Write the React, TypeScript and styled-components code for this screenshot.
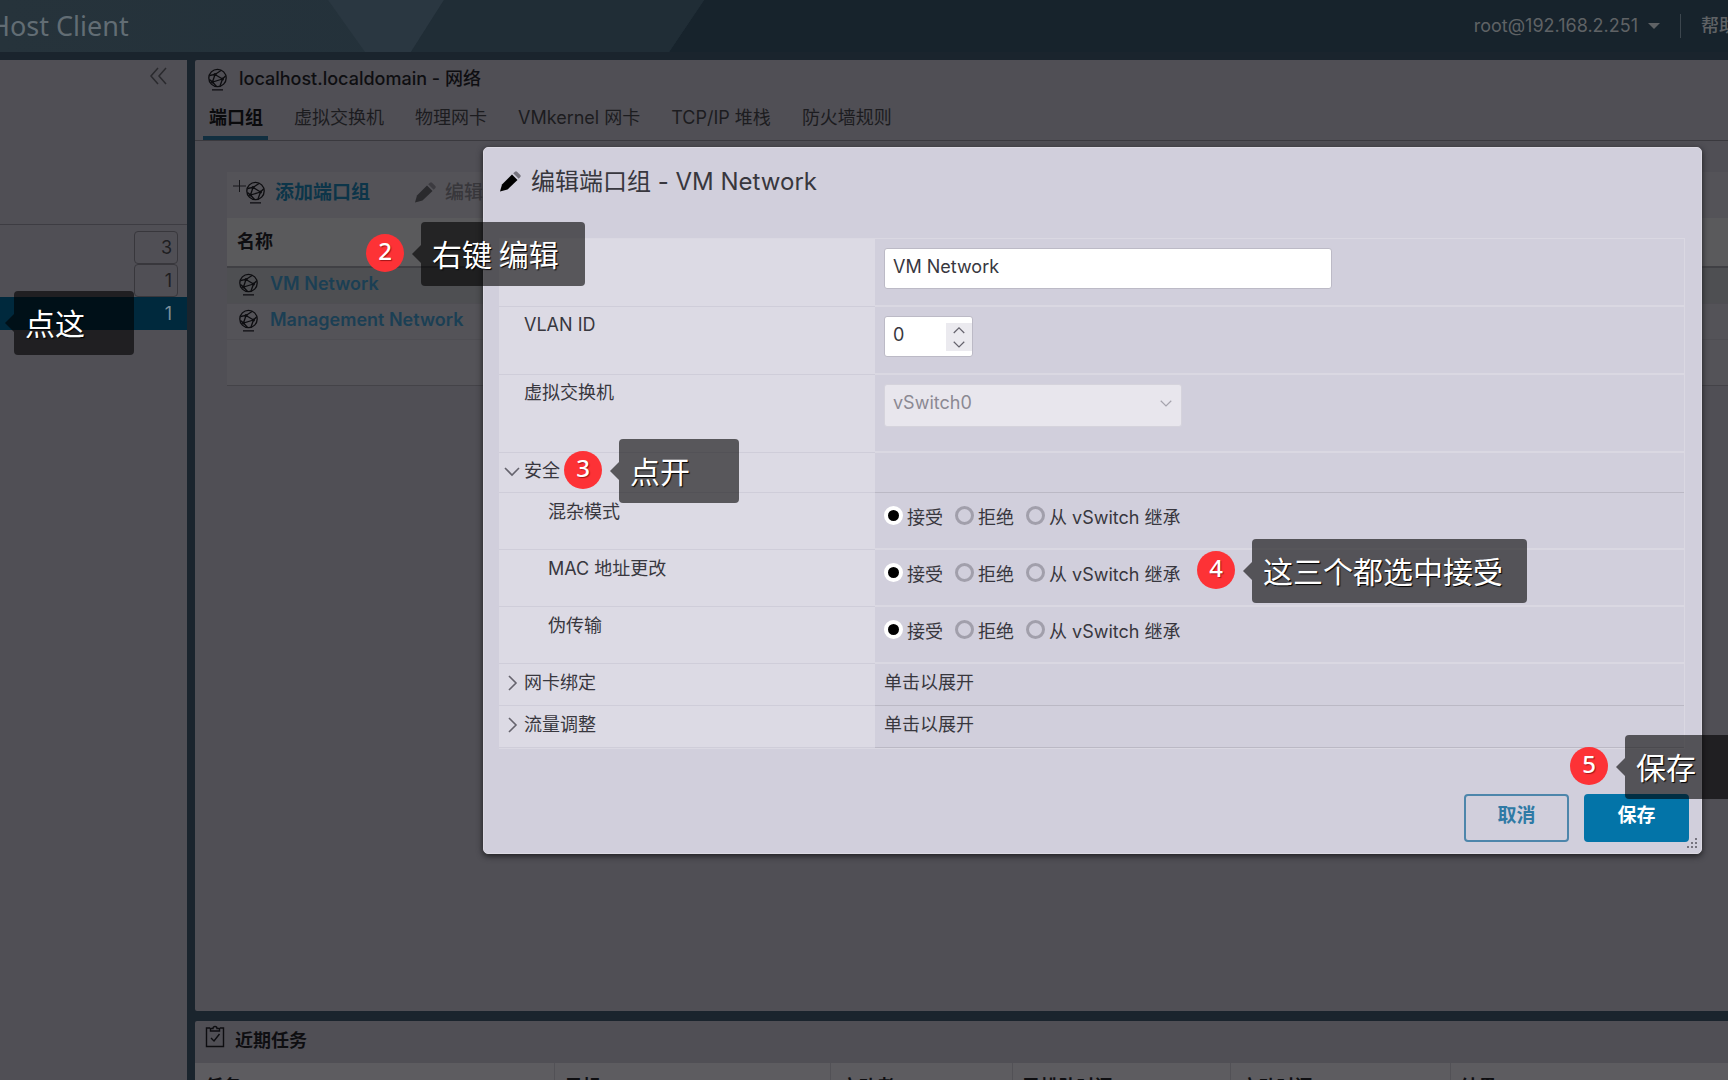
import React from 'react';
import styled, { createGlobalStyle, css } from 'styled-components';

const Global = createGlobalStyle`
  * { box-sizing: border-box; }
  html, body, #root { height: 100%; }
  body {
    margin: 0;
    overflow: hidden;
    background: #1a242d;
    color: #0e0e11;
    font-family: Inter, 'Noto Sans CJK SC', sans-serif;
    font-size: 18px;
    line-height: 24px;
  }
  button, input, select { font: inherit; color: inherit; margin: 0; }
  button { border: 0; background: none; padding: 0; text-align: left; }
  a { text-decoration: none; }
  ul, h1, h2, fieldset { margin: 0; padding: 0; border: 0; list-style: none; }
`;

const Shell = styled.div`
  display: flex;
  flex-direction: column;
  height: 100vh;
  overflow: hidden;
`;

const TopBar = styled.header`
  position: relative;
  flex: none;
  display: flex;
  align-items: center;
  justify-content: space-between;
  height: 52px;
  background: #17232c;
`;

const BarArt = styled.svg`
  position: absolute;
  inset: 0 auto auto 0;
`;

const Brand = styled.div`
  position: relative;
  margin-left: -10px;
  font-family: 'Noto Sans', sans-serif;
  font-size: 27px;
  line-height: 48px;
  color: #626d74;
  white-space: nowrap;
`;

const UserArea = styled.div`
  position: relative;
  flex: none;
  display: flex;
  align-items: center;
  margin-right: -9px;
  color: #5f6265;
`;

const UserButton = styled.button`
  display: flex;
  align-items: center;
  gap: 10px;
  padding-right: 20px;
  border-right: 1px solid #3c464e;
  color: #5f6265;
`;

const Caret = styled.span`
  border: 6px solid transparent;
  border-top-color: #5f6265;
  border-bottom: 0;
`;

const HelpButton = styled.button`
  padding-left: 20px;
  font-weight: 500;
  color: #5f6265;
  white-space: nowrap;
`;

const Body = styled.div`
  flex: 1;
  min-height: 0;
  display: flex;
  gap: 8px;
  padding-top: 8px;
`;

const Sidebar = styled.nav`
  flex: none;
  width: 187px;
  background: #504f55;
`;

const SideTop = styled.div`
  display: flex;
  justify-content: flex-end;
  align-items: flex-start;
  height: 165px;
  padding: 6px 20px;
  border-bottom: 1px solid #3d3c42;
  color: #2a2a2e;
`;

const SideList = styled.ul`
  padding-top: 6px;
`;

const SideRow = styled.button<{ $active?: boolean }>`
  display: flex;
  justify-content: flex-end;
  width: 100%;
  height: 33px;
  padding-right: 9px;
  background: ${p => (p.$active ? '#00293d' : 'transparent')};
`;

const Count = styled.span<{ $active?: boolean }>`
  width: 44px;
  height: 33px;
  padding: 0 5px;
  border: 1px solid ${p => (p.$active ? 'transparent' : '#38373c')};
  border-radius: 4px;
  line-height: 31px;
  text-align: right;
  color: ${p => (p.$active ? '#7c8f9a' : '#1e1e21')};
`;

const Column = styled.div`
  flex: 1;
  min-width: 0;
  display: flex;
  flex-direction: column;
  gap: 10px;
`;

const Main = styled.main`
  flex: 1;
  min-height: 0;
  background: #504f55;
  border-radius: 2px 0 0 2px;
`;

const PageTitle = styled.h1`
  display: flex;
  align-items: center;
  gap: 11px;
  padding: 7px 12px 3px;
  font-size: 18px;
  font-weight: 500;
`;

const Tabs = styled.div`
  display: flex;
  gap: 20px;
  padding-left: 8px;
  height: 47px;
  border-bottom: 1px solid #3a393e;
`;

const Tab = styled.button<{ $active?: boolean }>`
  padding: 6px 5px 0 6px;
  height: 46px;
  border-bottom: 4px solid ${p => (p.$active ? '#122f40' : 'transparent')};
  font-weight: ${p => (p.$active ? 700 : 400)};
  color: ${p => (p.$active ? '#0a0a0c' : '#1c1c1f')};
  white-space: nowrap;
`;

const Card = styled.section`
  margin: 31px 0 0 32px;
  height: 214px;
  background: #545358;
  border-bottom: 1px solid #444348;
`;

const Toolbar = styled.div`
  display: flex;
  align-items: center;
  height: 46px;
  padding-left: 6px;
  padding-bottom: 4px;
`;

const ToolButton = styled.button<{ $off?: boolean }>`
  display: flex;
  align-items: center;
  gap: 9px;
  margin-right: 44px;
  font-weight: ${p => (p.$off ? 500 : 700)};
  font-size: 19px;
  color: ${p => (p.$off ? '#38373b' : '#0c3549')};
  white-space: nowrap;
`;

const Grid = styled.table`
  width: 100%;
  border-collapse: collapse;
  th {
    height: 49px;
    padding: 0 0 0 10px;
    background: #5a5a5c;
    border-bottom: 2px solid #404044;
    text-align: left;
    font-weight: 700;
  }
  td { height: 36px; padding: 0 0 2px 11px; border-bottom: 1px solid #4f4e53; }
  tr:nth-child(1) td { background: #4e4f52; }
`;

const RowLink = styled.a`
  display: flex;
  align-items: center;
  gap: 11px;
  font-weight: 600;
  color: #1b3f54;
`;

const Tasks = styled.section`
  flex: none;
  height: 59px;
  overflow: hidden;
  background: #504f55;
  border-radius: 2px 0 0 0;
`;

const TasksTitle = styled.h2`
  display: flex;
  gap: 10px;
  height: 42px;
  padding: 4px 10px;
  font-size: 18px;
  font-weight: 700;
  span { padding-top: 4px; }
`;

const TaskTable = styled.table`
  width: 100%;
  table-layout: fixed;
  border-collapse: collapse;
  background: #5d5c60;
  th {
    padding: 12px 10px 6px;
    border-left: 1px solid #525156;
    text-align: left;
    white-space: nowrap;
    font-weight: 700;
  }
  th:first-child { border-left: 0; }
`;

const Dialog = styled.form`
  position: absolute;
  top: 147px;
  left: 483px;
  right: 26px;
  padding: 22px 16px 11px 15px;
  border: 1px solid #dcdae3;
  border-radius: 5px;
  background: #d1cfdc;
  box-shadow: 0 2px 6px #1d1d20;
  color: #38373e;
`;

const DialogTitle = styled.h2`
  display: flex;
  align-items: center;
  gap: 10px;
  height: 24px;
  margin-bottom: 44px;
  font-size: 24px;
  font-weight: 400;
`;

const Settings = styled.table`
  width: 100%;
  table-layout: fixed;
  border-collapse: separate;
  border-spacing: 0;
  border: 1px solid #dad8e2;
  border-left: 0;
  th {
    background: #dcdae4;
    border-bottom: 1px solid #cfcdd9;
    text-align: left;
    font-weight: 400;
    vertical-align: top;
  }
  td { border-bottom: 2px solid #dad8e2; vertical-align: top; }
`;

const Row = styled.tr<{ $h: number; $sub?: boolean; $top: number; $dark?: boolean }>`
  height: ${p => p.$h}px;
  th { padding: ${p => p.$top}px 0 0 ${p => (p.$sub ? 49 : 25)}px; }
  td { padding: ${p => (p.$dark ? 7 : 9)}px 0 0 9px; ${p => p.$dark && css`border-bottom: 1px solid #bbb9c5;`} }
`;

const Expander = styled.button`
  display: flex;
  align-items: center;
  gap: 4px;
  margin-left: -20px;
`;

const box = css`
  display: block;
  border: 1px solid #bcbac6;
  border-radius: 3px;
  background-color: #fff;
  padding: 0 8px 5px;
  height: 41px;
`;

const TextBox = styled.input`
  ${box}
  width: 448px;
`;

const SpinWrap = styled.span`
  ${box}
  display: flex;
  align-items: center;
  justify-content: space-between;
  width: 89px;
  padding: 0;
`;

const SpinInput = styled.input`
  width: 50px;
  border: 0;
  background: none;
  padding: 0 8px 4px;
  appearance: textfield;
`;

const SpinButtons = styled.span`
  display: flex;
  flex-direction: column;
  width: 26px;
  height: 28px;
  background: #ebeaef;
  button { height: 14px; display: flex; align-items: center; justify-content: center; }
`;

const SelectWrap = styled.span`
  display: grid;
  width: 298px;
  align-items: center;
  > * { grid-area: 1 / 1; }
  svg { justify-self: end; margin: 0 10px 6px 0; }
`;

const SelectBox = styled.select`
  ${box}
  width: 100%;
  height: 43px;
  appearance: none;
  background-color: #e8e6ed;
  border-color: #d5d3dc;
  color: #8b8993;
  opacity: 1;
`;

const Radios = styled.fieldset`
  display: flex;
  gap: 12px;
  padding-top: 4px;
`;

const RadioLabel = styled.label`
  display: flex;
  align-items: center;
  gap: 4px;
  white-space: nowrap;
`;

const Radio = styled.input`
  appearance: none;
  width: 19px;
  height: 19px;
  margin: 0 0 5px;
  border: 3px solid #a19fab;
  border-radius: 50%;
  &:checked { border: 4px solid #fff; background: #000; }
`;

const Footer = styled.div`
  display: flex;
  justify-content: flex-end;
  gap: 15px;
  margin: 45px -4px 0 0;
`;

const Action = styled.button<{ $primary?: boolean }>`
  width: 105px;
  height: 48px;
  padding-bottom: 4px;
  border: 2px solid ${p => (p.$primary ? '#0374a8' : '#4d86ab')};
  border-radius: 4px;
  background: ${p => (p.$primary ? '#0374a8' : 'transparent')};
  color: ${p => (p.$primary ? '#fff' : '#2f7aa5')};
  text-align: center;
  font-size: 19px;
  font-weight: 700;
`;

const Grip = styled.svg`
  position: absolute;
  right: 3px;
  bottom: 3px;
`;

const Note = styled.aside<{ $x: number; $y: number }>`
  position: absolute;
  left: ${p => p.$x}px;
  top: ${p => p.$y}px;
  display: flex;
  align-items: center;
`;

const Num = styled.span`
  width: 38px;
  height: 38px;
  margin: 0 8px 2px 0;
  border-radius: 50%;
  background: #fd3236;
  color: #fff;
  text-align: center;
  font-family: 'Noto Sans', sans-serif;
  font-size: 24px;
  font-weight: 500;
  line-height: 34px;
  text-shadow: 1px 1px 1px #a01518;
`;

const Arrow = styled.span`
  border: 9px solid transparent;
  border-left: 0;
  border-right-color: rgba(0, 0, 0, 0.6);
`;

const Bubble = styled.span<{ $w: number }>`
  width: ${p => p.$w}px;
  height: 64px;
  padding-left: 11px;
  border-radius: 4px;
  background: rgba(0, 0, 0, 0.6);
  color: #fff;
  font-family: 'Noto Sans CJK SC', sans-serif;
  font-size: 30px;
  line-height: 62px;
  white-space: nowrap;
  text-shadow: 1px 1px 1px #000;
`;

const NetIcon = () => (
  <svg width="21" height="23" viewBox="0 0 21 23" fill="none" stroke="#0d0d10" strokeWidth="1.300">
    <circle cx="10.500" cy="10" r="8.700" />
    <path d="M2.500 7.500L8 6.500l6-4M8 6.500l7.500 4.500L18.500 8M15.500 11L13 18M15.500 11L5.500 14 8 6.500M5.500 14L2.500 11.500M5.500 14l4 4.500M5 21.800h11" />
    <g fill="#0d0d10" stroke="none"><circle cx="8" cy="6.500" r="1.500" /><circle cx="15.500" cy="11" r="1.500" /><circle cx="5.500" cy="14" r="1.500" /></g>
  </svg>
);

const Pencil = ({ color, tip }: { color: string; tip: string }) => (
  <svg width="22" height="22" viewBox="0 0 22 22">
    <path fill={color} d="M1 20.500L3 13.500 13 3.500 18.500 9 8.500 18.500z" />
    <path fill={tip} d="M14.200 2.300L16 .7a1.500 1.500 0 0 1 2 0L21.300 4a1.500 1.500 0 0 1 0 2L19.700 7.800z" />
  </svg>
);

const Chevron = ({ dir, size = 16, color = '#65636d' }: { dir: 'up' | 'down' | 'right'; size?: number; color?: string }) => (
  <svg width={size} height={size} viewBox="0 0 16 16" fill="none" stroke={color} strokeWidth="1.600">
    <path d={{ up: 'M1 12l7-7 7 7', down: 'M1 5l7 7 7-7', right: 'M5 1l7 7-7 7' }[dir]} />
  </svg>
);

const Clipboard = () => (
  <svg width="20" height="23" viewBox="0 0 20 23" fill="none" stroke="#0d0d10" strokeWidth="1.400">
    <path d="M5 3H1.500v18.500h17V3H15M5.500 6V3.500H8a2 2 0 0 1 4 0h2.500V6zM6 13l3 3 5.500-7" />
  </svg>
);

const security = ['混杂模式', 'MAC 地址更改', '伪传输'];
const taskColumns: [string, string][] = [
  ['任务', '359px'], ['目标', '276px'], ['启动者', '182px'], ['已排队时间', '218px'], ['启动时间', '220px'], ['结果', 'auto'],
];

const Callout = ({ x, y, n, w, text }: { x: number; y: number; n?: number; w: number; text: string }) => (
  <Note $x={x} $y={y}>
    {n && <Num>{n}</Num>}
    <Arrow />
    <Bubble $w={w}>{text}</Bubble>
  </Note>
);

export default function App() {
  return (
    <>
      <Global />
      <Shell>
        <TopBar>
          <BarArt width="704" height="52" viewBox="0 0 704 52">
            <defs>
              <linearGradient id="bar" x1="0" x2="1"><stop offset="0" stopColor="#26333b" /><stop offset="1" stopColor="#22303a" /></linearGradient>
            </defs>
            <path d="M0 0H704L669 52H0z" fill="url(#bar)" />
            <path d="M328 0H444L411 52H365z" fill="#2a3741" />
            <path d="M444 0H704L669 52H411z" fill="#202d36" />
          </BarArt>
          <Brand>Host Client</Brand>
          <UserArea>
            <UserButton type="button">root@192.168.2.251<Caret /></UserButton>
            <HelpButton type="button">帮助</HelpButton>
          </UserArea>
        </TopBar>
        <Body>
          <Sidebar aria-label="导航器">
            <SideTop>
              <button type="button" aria-label="折叠">
                <svg width="18" height="20" viewBox="0 0 18 20" fill="none" stroke="currentColor" strokeWidth="1.500"><path d="M9 2L2 10l7 8M17 2l-7 8 7 8" /></svg>
              </button>
            </SideTop>
            <SideList>
              <li><SideRow type="button"><Count>3</Count></SideRow></li>
              <li><SideRow type="button"><Count>1</Count></SideRow></li>
              <li><SideRow type="button" $active><Count $active>1</Count></SideRow></li>
            </SideList>
          </Sidebar>
          <Column>
            <Main>
              <PageTitle><NetIcon />localhost.localdomain - 网络</PageTitle>
              <Tabs>
                <Tab type="button" $active>端口组</Tab>
                <Tab type="button">虚拟交换机</Tab>
                <Tab type="button">物理网卡</Tab>
                <Tab type="button">VMkernel 网卡</Tab>
                <Tab type="button">TCP/IP 堆栈</Tab>
                <Tab type="button">防火墙规则</Tab>
              </Tabs>
              <Card>
                <Toolbar>
                  <ToolButton type="button">
                    <svg width="33" height="30" viewBox="0 0 33 30" stroke="#16161a" fill="none">
                      <path d="M0 8h13M6.500 2v12" />
                      <svg x="12" y="3" width="21" height="23"><NetIcon /></svg>
                    </svg>
                    添加端口组
                  </ToolButton>
                  <ToolButton type="button" $off><Pencil color="#2a2a2d" tip="#3c3b40" />编辑</ToolButton>
                </Toolbar>
                <Grid>
                  <thead><tr><th scope="col">名称</th></tr></thead>
                  <tbody>
                    <tr><td><RowLink href="#vm"><NetIcon />VM Network</RowLink></td></tr>
                    <tr><td><RowLink href="#mgmt"><NetIcon />Management Network</RowLink></td></tr>
                  </tbody>
                </Grid>
              </Card>
            </Main>
            <Tasks>
              <TasksTitle><Clipboard /><span>近期任务</span></TasksTitle>
              <TaskTable>
                <colgroup>{taskColumns.map(([name, width]) => <col key={name} style={{ width }} />)}</colgroup>
                <thead><tr>{taskColumns.map(([name]) => <th key={name} scope="col">{name}</th>)}</tr></thead>
              </TaskTable>
            </Tasks>
          </Column>
        </Body>
      </Shell>

      <Dialog role="dialog" aria-labelledby="dialog-title" onSubmit={e => e.preventDefault()}>
        <DialogTitle id="dialog-title"><Pencil color="#000" tip="#77757f" />编辑端口组 - VM Network</DialogTitle>
        <Settings>
          <colgroup><col style={{ width: 376 }} /><col /></colgroup>
          <tbody>
            <Row $h={68} $top={6}>
              <th scope="row" />
              <td><TextBox aria-label="名称" defaultValue="VM Network" /></td>
            </Row>
            <Row $h={68} $top={6}>
              <th scope="row"><label htmlFor="vlan">VLAN ID</label></th>
              <td>
                <SpinWrap>
                  <SpinInput id="vlan" inputMode="numeric" defaultValue="0" />
                  <SpinButtons>
                    <button type="button" aria-label="增加"><Chevron dir="up" size={12} /></button>
                    <button type="button" aria-label="减少"><Chevron dir="down" size={12} /></button>
                  </SpinButtons>
                </SpinWrap>
              </td>
            </Row>
            <Row $h={78} $top={6}>
              <th scope="row"><label htmlFor="switch">虚拟交换机</label></th>
              <td>
                <SelectWrap>
                  <SelectBox id="switch" disabled><option>vSwitch0</option></SelectBox>
                  <Chevron dir="down" size={12} color="#a5a3ad" />
                </SelectWrap>
              </td>
            </Row>
            <Row $h={40} $top={6} $dark>
              <th scope="row"><Expander type="button" aria-expanded="true"><Chevron dir="down" />安全</Expander></th>
              <td />
            </Row>
            {security.map((name, i) => (
              <Row key={name} $h={57} $top={7} $sub>
                <th scope="row">{name}</th>
                <td>
                  <Radios aria-label={name}>
                    <RadioLabel><Radio type="radio" name={`policy${i}`} defaultChecked />接受</RadioLabel>
                    <RadioLabel><Radio type="radio" name={`policy${i}`} />拒绝</RadioLabel>
                    <RadioLabel><Radio type="radio" name={`policy${i}`} />从 vSwitch 继承</RadioLabel>
                  </Radios>
                </td>
              </Row>
            ))}
            {['网卡绑定', '流量调整'].map(name => (
              <Row key={name} $h={42} $top={7} $dark>
                <th scope="row"><Expander type="button" aria-expanded="false"><Chevron dir="right" />{name}</Expander></th>
                <td>单击以展开</td>
              </Row>
            ))}
          </tbody>
        </Settings>
        <Footer>
          <Action type="button">取消</Action>
          <Action type="submit" $primary>保存</Action>
        </Footer>
        <Grip width="12" height="12" viewBox="0 0 12 12" fill="#76747e">
          <path d="M9 0h2v2H9zM9 4h2v2H9zM9 8h2v2H9zM5 4h2v2H5zM5 8h2v2H5zM1 8h2v2H1z" />
        </Grip>
      </Dialog>

      <Callout x={5} y={291} w={120} text="点这" />
      <Callout x={366} y={222} n={2} w={164} text="右键 编辑" />
      <Callout x={564} y={439} n={3} w={120} text="点开" />
      <Callout x={1197} y={539} n={4} w={275} text="这三个都选中接受" />
      <Callout x={1570} y={735} n={5} w={120} text="保存" />
    </>
  );
}
